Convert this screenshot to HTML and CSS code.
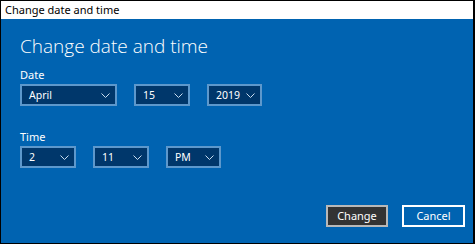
FILE: index.html
```html
<!DOCTYPE html>
<html>
<head>
<meta charset="utf-8">
<link rel="stylesheet" href="styles.css">
</head>
<body>
<div class="window">
  <div class="titlebar">Change date and time</div>
  <div class="content">
    <h1 class="heading">Change date and time</h1>
    <div class="label">Date</div>
    <div class="row">
      <div class="combo w97"><span>April</span><svg class="chev" width="9" height="5" viewBox="0 0 9 5"><path d="M0.5 0.5 L4.5 4.5 L8.5 0.5" fill="none" stroke="#c8dcef" stroke-width="1"/></svg></div>
      <div class="combo w56"><span>15</span><svg class="chev" width="9" height="5" viewBox="0 0 9 5"><path d="M0.5 0.5 L4.5 4.5 L8.5 0.5" fill="none" stroke="#c8dcef" stroke-width="1"/></svg></div>
      <div class="combo w55"><span>2019</span><svg class="chev" width="9" height="5" viewBox="0 0 9 5"><path d="M0.5 0.5 L4.5 4.5 L8.5 0.5" fill="none" stroke="#c8dcef" stroke-width="1"/></svg></div>
    </div>
    <div class="label time">Time</div>
    <div class="row">
      <div class="combo w56"><span>2</span><svg class="chev" width="9" height="5" viewBox="0 0 9 5"><path d="M0.5 0.5 L4.5 4.5 L8.5 0.5" fill="none" stroke="#c8dcef" stroke-width="1"/></svg></div>
      <div class="combo w56"><span>11</span><svg class="chev" width="9" height="5" viewBox="0 0 9 5"><path d="M0.5 0.5 L4.5 4.5 L8.5 0.5" fill="none" stroke="#c8dcef" stroke-width="1"/></svg></div>
      <div class="combo w55"><span>PM</span><svg class="chev" width="9" height="5" viewBox="0 0 9 5"><path d="M0.5 0.5 L4.5 4.5 L8.5 0.5" fill="none" stroke="#c8dcef" stroke-width="1"/></svg></div>
    </div>
    <div class="buttons">
      <div class="btn primary">Change</div>
      <div class="btn secondary">Cancel</div>
    </div>
  </div>
</div>
</body>
</html>
```

FILE: styles.css
```css
* { box-sizing: border-box; }
html, body { margin: 0; padding: 0; background: #000; }
body { width: 475px; height: 244px; overflow: hidden; font-family: "Noto Sans", "Open Sans", sans-serif; }
.window {
  width: 472px;
  height: 242px;
  margin: 1px 0 0 1px;
  display: flex;
  flex-direction: column;
  background: #0063b1;
}
.titlebar {
  height: 18px;
  background: #fff;
  color: #000;
  font-size: 11px;
  line-height: 18px;
  padding-left: 4px;
}
.content {
  flex: 1;
  padding: 0 8px 0 19px;
  display: flex;
  flex-direction: column;
  color: #fff;
}
.heading {
  margin: 14px 0 0 0;
  font-family: "Open Sans", sans-serif;
  font-weight: 300;
  font-size: 19px;
  line-height: 26px;
}
.label {
  margin-top: 8px;
  font-size: 11px;
  line-height: 15px;
}
.label.time { margin-top: 23px; }
.row {
  display: flex;
  gap: 17px;
  margin-top: 2px;
}
.combo {
  height: 22px;
  border: 2px solid #5d98cc;
  background: #00376b;
  display: flex;
  align-items: center;
  justify-content: space-between;
  padding: 0 5px 0 7px;
  font-size: 10.5px;
}
.w97 { width: 97px; }
.w56 { width: 56px; }
.w55 { width: 55px; }
.chev { display: block; }
.buttons {
  margin-top: auto;
  margin-bottom: 16px;
  display: flex;
  justify-content: flex-end;
  gap: 14px;
}
.btn {
  height: 22px;
  border: 2px solid;
  font-size: 11px;
  line-height: 18px;
  text-align: center;
}
.primary { width: 62px; background: #333; border-color: #b8b8b8; }
.secondary { width: 63px; background: transparent; border-color: #fff; }
```
